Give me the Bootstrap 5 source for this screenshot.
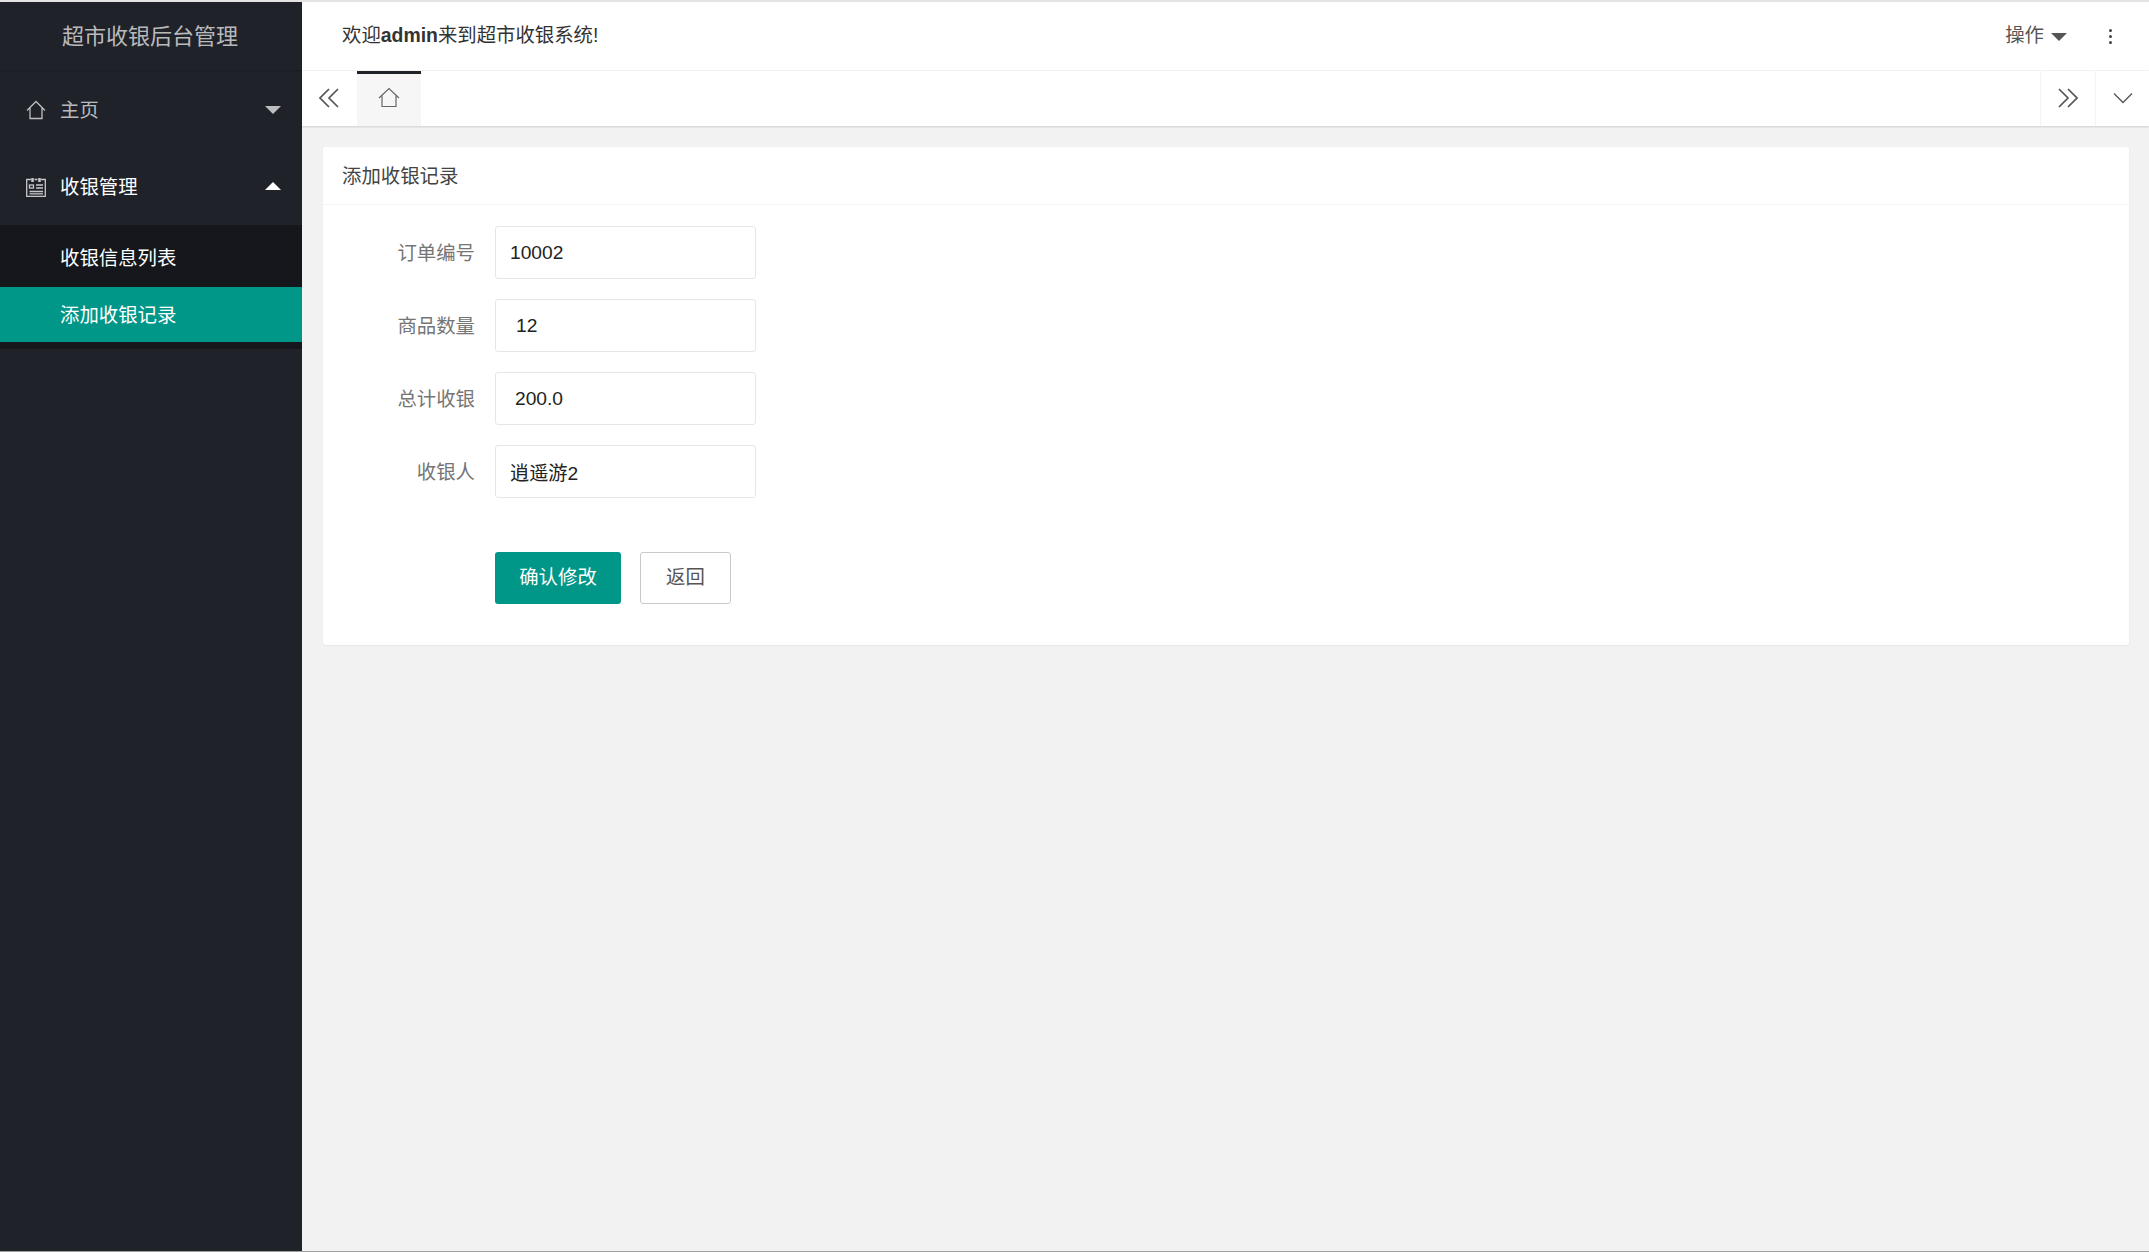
<!DOCTYPE html>
<html lang="zh-CN">
<head>
<meta charset="utf-8">
<title>超市收银后台管理</title>
<link href="https://cdn.jsdelivr.net/npm/bootstrap@5.3.0/dist/css/bootstrap.min.css" rel="stylesheet">
<style>
html,body{height:100%;}
body{font-family:"Liberation Sans","Noto Sans CJK SC",sans-serif;font-size:19.4px;color:#333;background:#f2f2f2;overflow:hidden;}
.shell{height:1252px;border-top:2px solid #e4e4e4;border-bottom:1px solid #a0a0a0;}
.side{width:302px;flex:none;background:#20222a;color:rgba(255,255,255,.7);}
.brand{height:68px;font-size:22px;box-shadow:0 1px 2px rgba(0,0,0,.15);padding-right:2px;}
.menu-item{height:77px;padding:0 21px 0 26px;}
.menu-item.first{height:76px;margin-top:2px;}
.menu-item span.flex-grow-1{padding-top:1px;}
.menu-on span.flex-grow-1{padding-top:3px;}
.menu-item svg.ic{width:20px;height:20px;margin-right:14px;flex:none;}
.menu-on{color:#fff;}
.tri{width:0;height:0;border-left:8.5px solid transparent;border-right:8.5px solid transparent;}
.tri-down{border-top:8px solid rgba(255,255,255,.7);margin-top:-1px;}
.tri-up{border-bottom:8px solid #fff;margin-top:-1px;}
.sub{background:rgba(0,0,0,.3);padding-bottom:7px;color:#fff;}
.sub-row{height:62px;padding:6px 0 0 60px;}
.sub-row.sel{height:55px;background:#009688;padding-top:2px;}
.main{min-width:0;}
.top{height:69px;background:#fff;padding:0 20px 0 40px;border-bottom:1px solid #f4f4f4;}
.top b{font-weight:700;}
.op{gap:7px;color:#555;margin-right:4px;}
.tri-op{border-left:8.5px solid transparent;border-right:8.5px solid transparent;border-top:8px solid #555;margin-top:2px;}
.dots{width:3px;margin:0 17px 0 38px;}
.dots i{display:block;width:3px;height:3px;border-radius:50%;background:#444;margin:3px 0;}
.tabs{height:55px;background:#fff;box-shadow:0 1px 2px rgba(0,0,0,.15);}
.tab-arrow{width:55px;color:#555;padding-bottom:2px;}
.tab-arrow svg{margin-right:2px;}
.tab-home{width:64px;background:#f6f6f6;border-top:3px solid #20222a;padding-bottom:5px;}
.tab-end{width:55px;border-left:1px solid #f4f4f4;padding-bottom:2px;}
.tab-end.last{width:54px;}
.content{padding:21px 20px 21px 21px;}
.panel{background:#fff;border:0;border-radius:3px;height:498px;box-shadow:0 1px 2px rgba(0,0,0,.05);}
.panel-head{height:58px;padding:2px 19px 0;border-bottom:1px solid #f6f6f6;color:#444;}
.panel-body{padding:21px 0 0;}
.frow{height:53px;margin-bottom:20px;}
.frow label{width:152px;text-align:right;color:#757575;flex:none;padding:2px 0 0;margin-right:20px;}
.fld{width:261px;height:100%;border:1px solid #e6e6e6;border-radius:3px;font-size:19.2px;color:#222;padding:0 14px;font-family:inherit;box-shadow:none;}
.fld.p2{padding-left:20px;}
.fld.p3{padding-left:19px;}
.gap-lab{width:172px;flex:none;}
.btn-row{margin-top:54px;gap:19px;}
.btn-row .gap-lab{margin-right:-19px;}
.btn-ok{width:126px;height:52px;background:#009688;border:0;color:#fff;font-size:19.4px;border-radius:3px;padding:0;}
.btn-back{width:91px;height:52px;background:#fff;border:1px solid #c9c9c9;color:#555;font-size:19.4px;border-radius:3px;padding:0;}
</style>
</head>
<body>
<div class="shell d-flex">
  <aside class="side">
    <div class="brand d-flex align-items-center justify-content-center">超市收银后台管理</div>
    <div class="menu-item first d-flex align-items-center">
      <svg class="ic" viewBox="0 0 20 20" fill="none" stroke="currentColor" stroke-width="1.3"><path d="M1 10.500 10 1.500l9 9"/><path d="M4 8v10.500h12V8"/></svg>
      <span class="flex-grow-1">主页</span><span class="tri tri-down"></span>
    </div>
    <div class="menu-item menu-on d-flex align-items-center">
      <svg class="ic" viewBox="0 0 20 20" fill="none" stroke="rgba(255,255,255,.75)" stroke-width="1.3"><path d="M5 2.500H.7V19.300H19.300V2.500H15M8.500 2.500h3"/><path d="M6.500 1v4M13.500 1v4" stroke-width="2.500"/><rect x="3.500" y="8" width="4" height="3"/><path d="M10 8h7M10 11h7M3.500 14.500h13.500M3.500 16.800h13.500"/></svg>
      <span class="flex-grow-1">收银管理</span><span class="tri tri-up"></span>
    </div>
    <div class="sub">
      <div class="sub-row d-flex align-items-center">收银信息列表</div>
      <div class="sub-row sel d-flex align-items-center">添加收银记录</div>
    </div>
  </aside>
  <main class="main flex-grow-1 d-flex flex-column">
    <header class="top d-flex align-items-center">
      <div class="flex-grow-1">欢迎<b>admin</b>来到超市收银系统!</div>
      <div class="op d-flex align-items-center">操作<span class="tri-op"></span></div>
      <div class="dots"><i></i><i></i><i></i></div>
    </header>
    <nav class="tabs d-flex">
      <div class="tab-arrow d-flex align-items-center justify-content-center">
        <svg width="20" height="20" viewBox="0 0 20 20" fill="none" stroke="currentColor" stroke-width="1.7"><path d="M10 1 1 10l9 9M19 1l-9 9 9 9"/></svg>
      </div>
      <div class="tab-home d-flex align-items-center justify-content-center">
        <svg width="22" height="21" viewBox="0 0 22 21" fill="none" stroke="#666" stroke-width="1.200"><path d="M1 11 11 1.500 21 11"/><path d="M4 8.500V19.500H18V8.500"/></svg>
      </div>
      <div class="flex-grow-1"></div>
      <div class="tab-end d-flex align-items-center justify-content-center">
        <svg width="20" height="20" viewBox="0 0 20 20" fill="none" stroke="#555" stroke-width="1.7"><path d="M1 1l9 9-9 9M10 1l9 9-9 9"/></svg>
      </div>
      <div class="tab-end last d-flex align-items-center justify-content-center">
        <svg width="20" height="12" viewBox="0 0 20 12" fill="none" stroke="#555" stroke-width="1.300"><path d="M1 1.500 10 10.500 19 1.500"/></svg>
      </div>
    </nav>
    <section class="content">
      <div class="card panel">
        <div class="panel-head d-flex align-items-center">添加收银记录</div>
        <form class="panel-body">
          <div class="frow d-flex align-items-center"><label>订单编号</label><input class="form-control fld" value="10002"></div>
          <div class="frow d-flex align-items-center"><label>商品数量</label><input class="form-control fld p2" value="12"></div>
          <div class="frow d-flex align-items-center"><label>总计收银</label><input class="form-control fld p3" value="200.0"></div>
          <div class="frow d-flex align-items-center"><label>收银人</label><input class="form-control fld" value="逍遥游2"></div>
          <div class="d-flex btn-row">
            <div class="gap-lab"></div>
            <button type="button" class="btn btn-ok">确认修改</button>
            <button type="button" class="btn btn-back">返回</button>
          </div>
        </form>
      </div>
    </section>
  </main>
</div>
<script src="https://cdn.jsdelivr.net/npm/bootstrap@5.3.0/dist/js/bootstrap.bundle.min.js"></script>
</body>
</html>
